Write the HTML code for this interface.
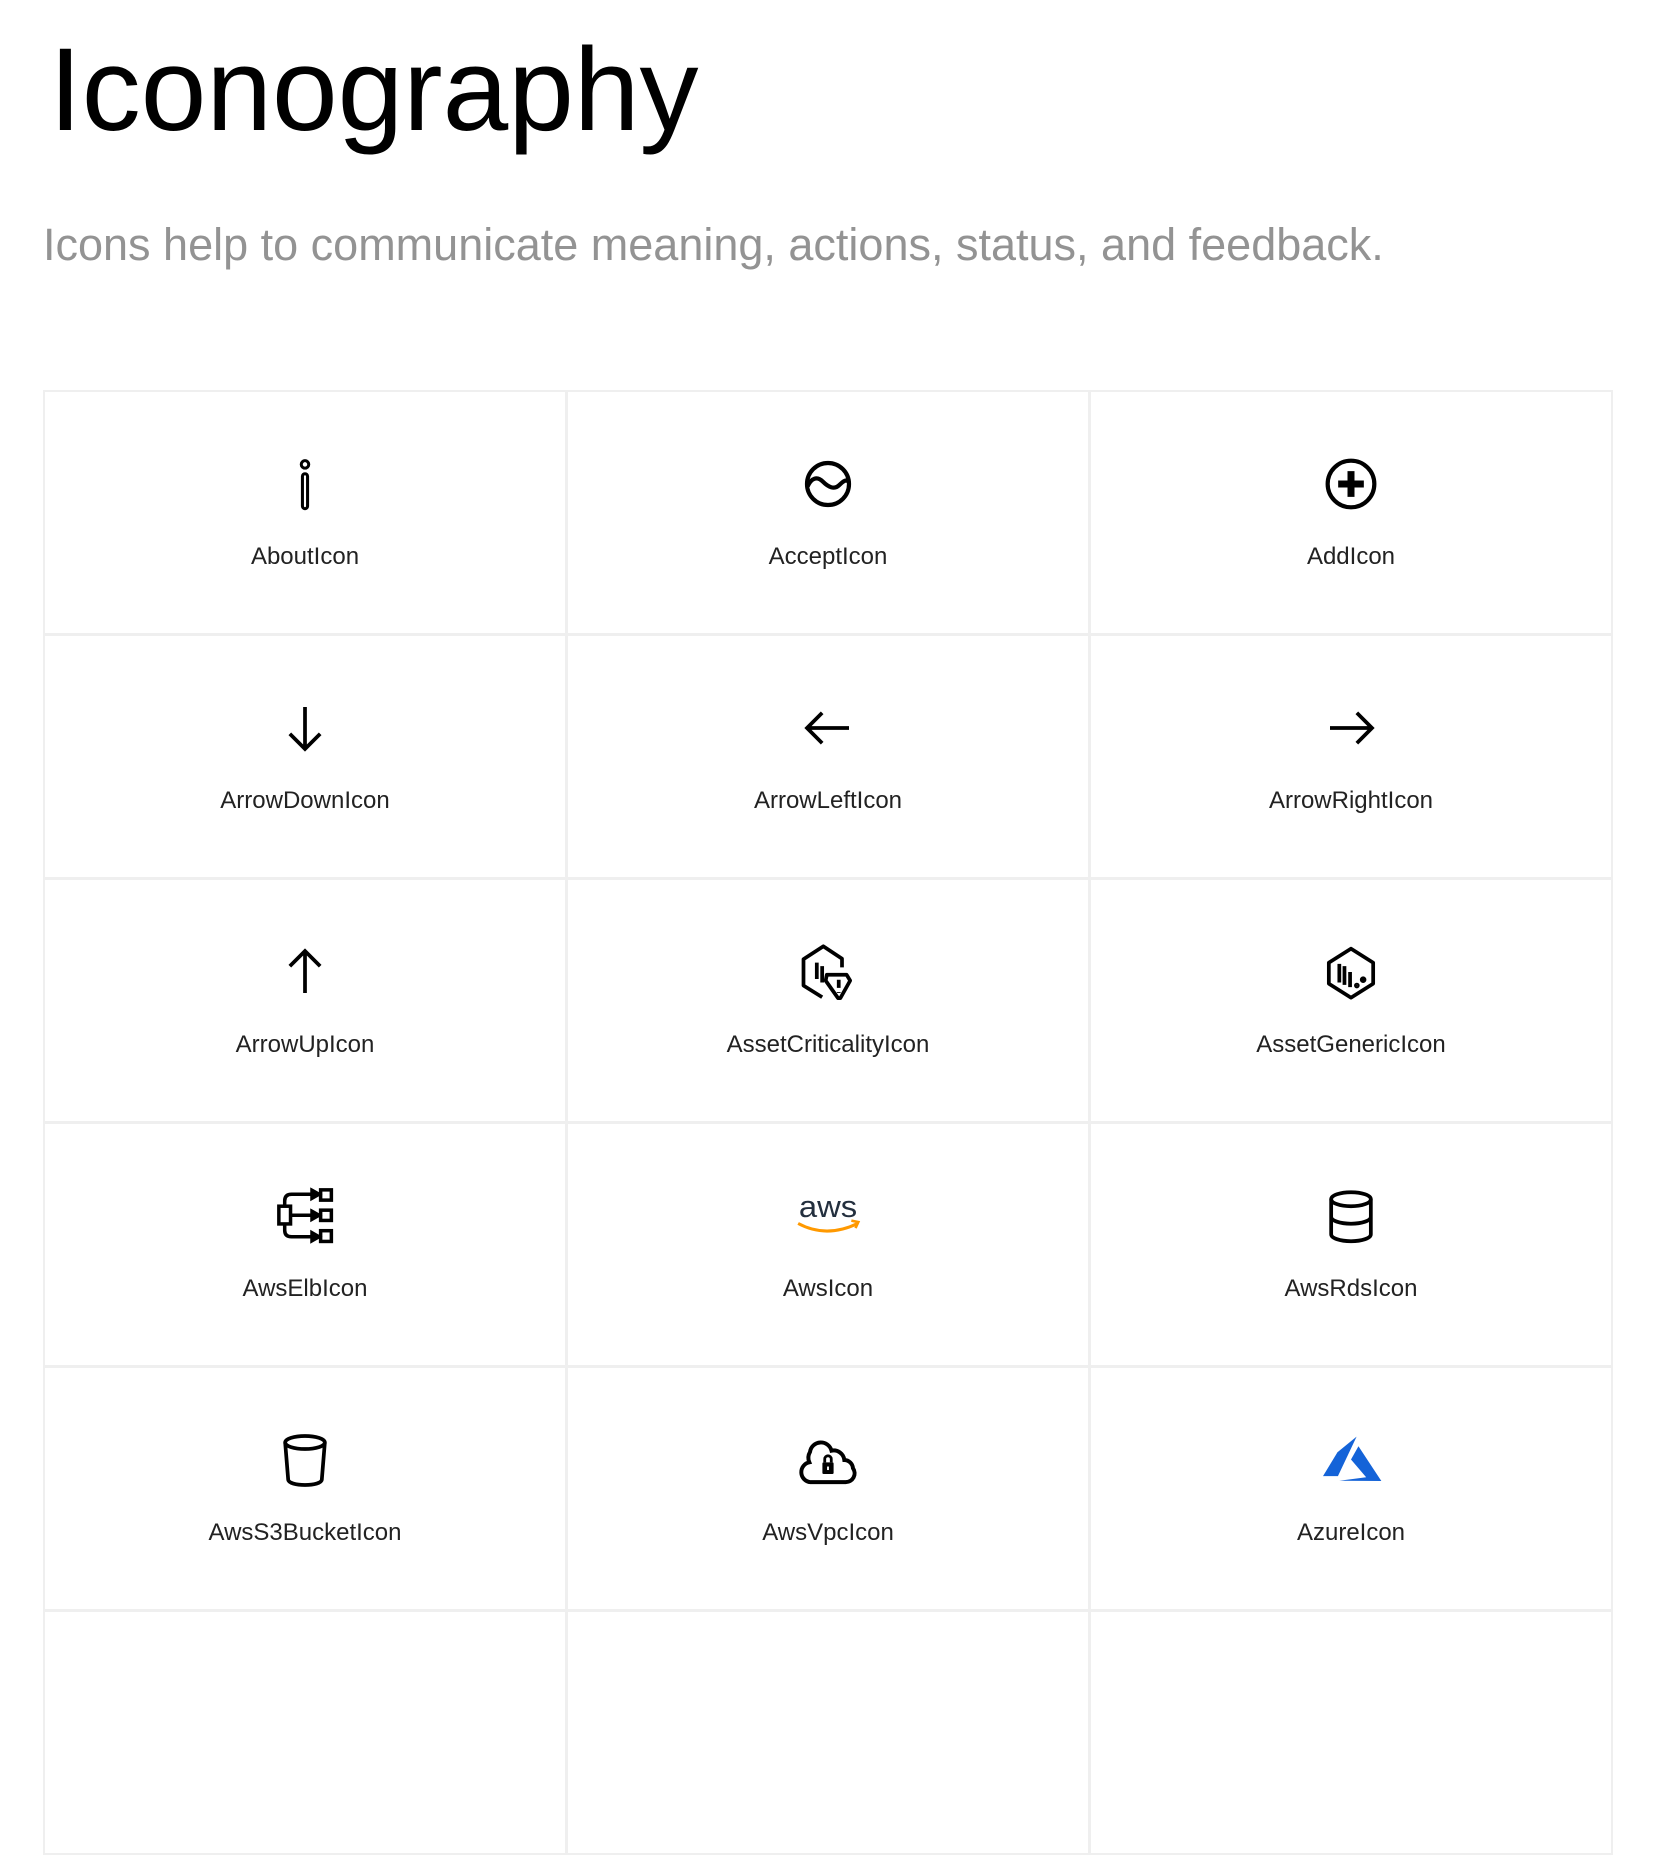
<!DOCTYPE html>
<html><head><meta charset="utf-8"><style>
html,body{margin:0;padding:0;background:#fff;width:1656px;height:1640px;overflow:hidden;font-family:"Liberation Sans",sans-serif}
h1{position:absolute;left:49px;top:26px;margin:0;font-weight:400;font-size:118px;line-height:1.1;color:#000}
.sub{position:absolute;left:43px;top:219px;font-size:45px;line-height:52px;color:#939393;margin:0;white-space:nowrap}
.cell{position:absolute;width:524px;height:245px;box-sizing:border-box;border:2px solid #efefef}
.cell svg{position:absolute;left:50%;top:64px;margin-left:-28px;width:56px;height:56px;overflow:visible}
.cell span{position:absolute;left:0;right:0;top:151px;text-align:center;font-size:24px;color:#222}
</style></head><body>
<h1>Iconography</h1>
<p class="sub">Icons help to communicate meaning, actions, status, and feedback.</p>

<div class="cell" style="left:43px;top:390px"><svg viewBox="0 0 24 24" fill="none" stroke="#000" stroke-width="1.3"><circle cx="12" cy="3.6" r="1.6"/><rect x="10.9" y="7.6" width="2.2" height="15" rx="1.1"/></svg><span>AboutIcon</span></div>
<div class="cell" style="left:566px;top:390px"><svg viewBox="0 0 24 24" fill="none" stroke="#000" stroke-width="1.8"><circle cx="12" cy="12" r="9"/><path d="M3.3 13c1.5-3.5 4-4.5 6.5-2s5 3.5 7 1.5 3-2.5 4-1.5"/></svg><span>AcceptIcon</span></div>
<div class="cell" style="left:1089px;top:390px"><svg viewBox="0 0 24 24" fill="none" stroke="#000" stroke-width="1.8"><circle cx="12" cy="12" r="10"/><path d="M12 6.5v11M6.5 12h11" stroke-width="3"/></svg><span>AddIcon</span></div>

<div class="cell" style="left:43px;top:634px"><svg viewBox="0 0 24 24" fill="none" stroke="#000" stroke-width="1.6"><path d="M12 3v18M5.5 14.5 12 21l6.5-6.5"/></svg><span>ArrowDownIcon</span></div>
<div class="cell" style="left:566px;top:634px"><svg viewBox="0 0 24 24" fill="none" stroke="#000" stroke-width="1.6"><path d="M21 12H3M9.5 5.5 3 12l6.5 6.5"/></svg><span>ArrowLeftIcon</span></div>
<div class="cell" style="left:1089px;top:634px"><svg viewBox="0 0 24 24" fill="none" stroke="#000" stroke-width="1.6"><path d="M3 12h18M14.5 5.5 21 12l-6.5 6.5"/></svg><span>ArrowRightIcon</span></div>

<div class="cell" style="left:43px;top:878px"><svg viewBox="0 0 24 24" fill="none" stroke="#000" stroke-width="1.6"><path d="M12 21V3M5.5 9.5 12 3l6.5 6.5"/></svg><span>ArrowUpIcon</span></div>
<div class="cell" style="left:566px;top:878px"><svg viewBox="0 0 24 24" fill="none" stroke="#000" stroke-width="1.6" stroke-linejoin="round"><path d="M9.5 22.8 1.5 17.8V6.5L10 1l8 5.3v3.7"/><path d="M7.2 8v7M9.5 9.5v7"/><path d="M11.5 13.2h8.5l1.5 2.5-4.2 7.5h-1L11 15.7z"/><path d="M16.6 15.3v3.5M16.6 20.6v.4"/></svg><span>AssetCriticalityIcon</span></div>
<div class="cell" style="left:1089px;top:878px"><svg viewBox="0 0 24 24" fill="none" stroke="#000" stroke-width="1.6" stroke-linejoin="round"><path d="M12 2l9.5 6v9L12 23l-9.5-6V8z"/><path d="M7 8.5v8M9.2 9.5v8M11.6 12v6.5"/><circle cx="14.5" cy="17.8" r=".4" fill="#000"/><circle cx="17.2" cy="15.3" r=".6" fill="#000"/></svg><span>AssetGenericIcon</span></div>

<div class="cell" style="left:43px;top:1122px"><svg viewBox="0 0 24 24" fill="none" stroke="#000" stroke-width="1.5"><rect x=".8" y="7.8" width="5" height="7.6"/><rect x="18.7" y=".8" width="4.6" height="4.4"/><rect x="18.7" y="9.5" width="4.6" height="4.4"/><rect x="18.7" y="18.3" width="4.6" height="4.6"/><path d="M5.8 11.7h10M3.3 7.8V5.5q0-2.8 3-2.8h9.5M3.3 15.4v2.7q0 2.8 3 2.8h9.5"/><path d="M15 1l3 1.7-3 1.7zM15 10l3 1.7-3 1.7zM15 19.2l3 1.7-3 1.7z" fill="#000"/></svg><span>AwsElbIcon</span></div>
<div class="cell" style="left:566px;top:1122px"><svg viewBox="0 0 24 24"><text x="12" y="12.5" text-anchor="middle" textLength="25" lengthAdjust="spacingAndGlyphs" font-family="Liberation Sans,sans-serif" font-size="13" fill="#232f3e">aws</text><path d="M-.8 15.2q12 6.5 25.5 0" fill="none" stroke="#f90" stroke-width="1.3"/><path d="M22 14l3 .6-1.2 2.6" fill="none" stroke="#f90" stroke-width="1.1"/></svg><span>AwsIcon</span></div>
<div class="cell" style="left:1089px;top:1122px"><svg viewBox="0 0 24 24" fill="none" stroke="#000" stroke-width="1.6"><ellipse cx="12" cy="4.8" rx="8.5" ry="3"/><path d="M3.5 4.8v15c0 1.7 3.8 3 8.5 3s8.5-1.3 8.5-3v-15M3.5 12.3c0 1.7 3.8 3 8.5 3s8.5-1.3 8.5-3"/></svg><span>AwsRdsIcon</span></div>

<div class="cell" style="left:43px;top:1366px"><svg viewBox="0 0 24 24" fill="none" stroke="#000" stroke-width="1.6"><ellipse cx="12" cy="4.5" rx="8.5" ry="2.8"/><path d="M3.5 4.5l1.3 16c.2 1.3 3.2 2.2 7.2 2.2s7-.9 7.2-2.2l1.3-16"/></svg><span>AwsS3BucketIcon</span></div>
<div class="cell" style="left:566px;top:1366px"><svg viewBox="0 0 24 24" fill="none" stroke="#000" stroke-width="1.7"><path d="M4.5 21.5h15a3.8 3.8 0 0 0 3.2-6 3.8 3.8 0 0 0-3.7-3.5 4.6 4.6 0 0 0-5.5-4A4.7 4.7 0 0 0 4.3 8.5 5 5 0 0 0 4 13a4.3 4.3 0 0 0 .5 8.5z"/><rect x="9.6" y="13" width="4.8" height="5" rx=".5" fill="#000" stroke="none"/><path d="M10.6 13v-1.4a1.4 1.4 0 0 1 2.8 0V13" stroke-width="1.2"/><path d="M12 14.8v1.5" stroke="#fff" stroke-width=".8"/></svg><span>AwsVpcIcon</span></div>
<div class="cell" style="left:1089px;top:1366px"><svg viewBox="0 0 24 24"><path d="M14.4 2 6.2 8.7 0 18.9h6.4z" fill="#1463d8"/><path d="M15.2 6.1 25 21 7 20.9l11.5-1.5-6.5-7.6z" fill="#1463d8"/></svg><span>AzureIcon</span></div>

<div class="cell" style="left:43px;top:1610px"></div>
<div class="cell" style="left:566px;top:1610px"></div>
<div class="cell" style="left:1089px;top:1610px"></div>
</body></html>
